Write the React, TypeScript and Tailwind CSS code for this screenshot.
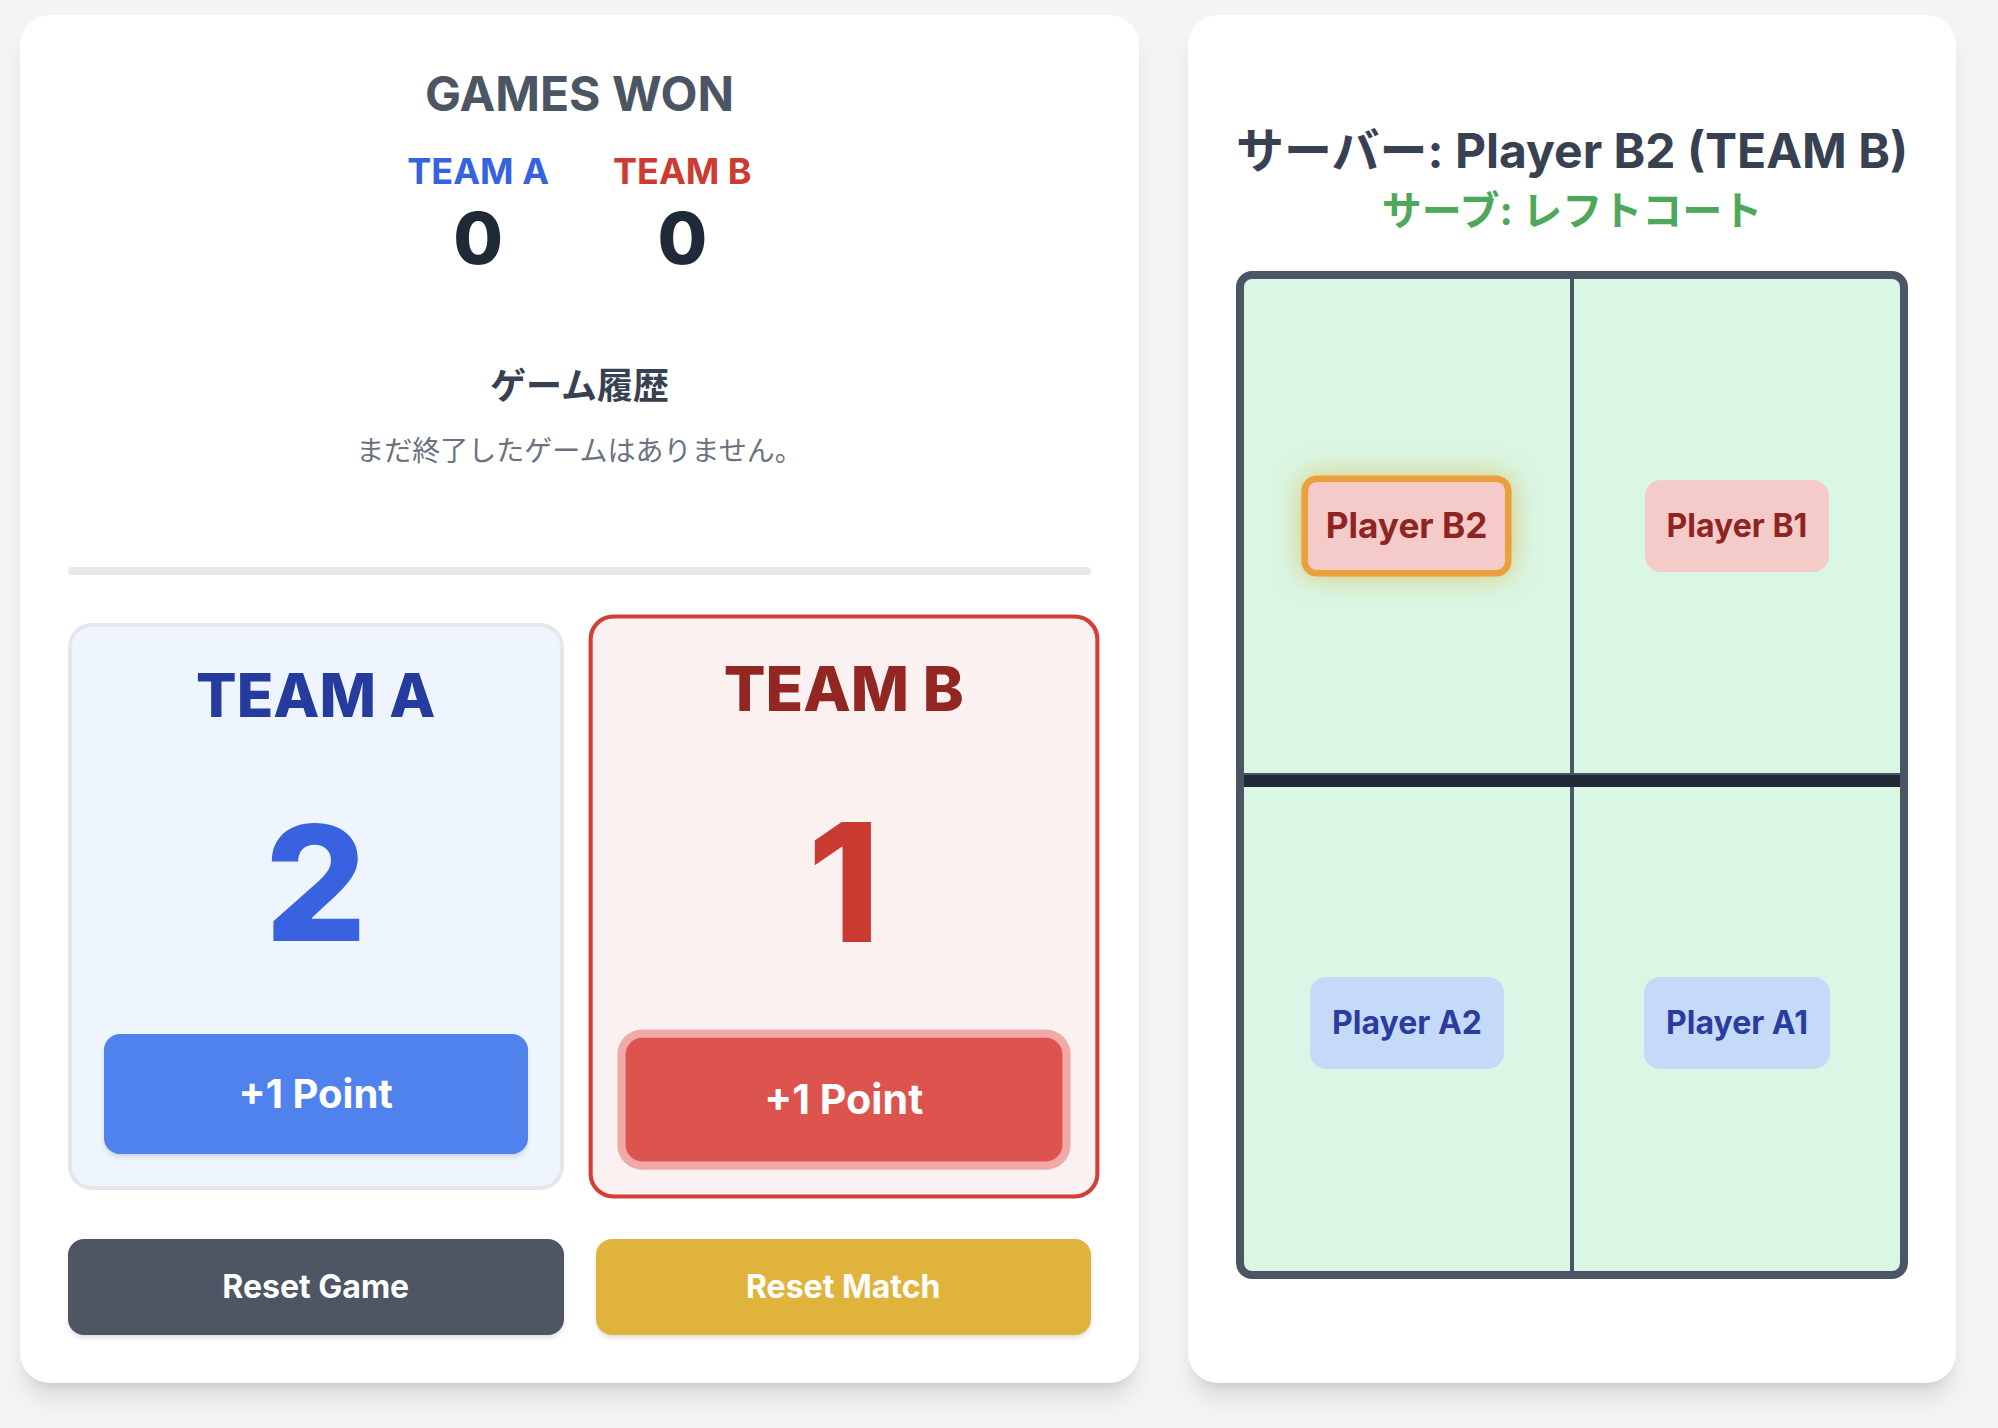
import React from "react";

function TeamCard({
  name,
  score,
  active,
}: {
  name: string;
  score: number;
  active: boolean;
}) {
  if (active) {
    return (
      <div className="h-[567px] scale-[1.03] rounded-[24px] border-4 border-[#d33f36] bg-[#fbf1f0] px-[32px] pt-[38px] pb-[32px] flex flex-col items-center">
        <div className="text-[60px] leading-[60px] font-extrabold text-[#922622]">{name}</div>
        <div className="mt-[78px] text-[160px] leading-[160px] font-extrabold text-[#c93a30]">{score}</div>
        <button className="mt-auto w-full h-[120px] rounded-[16px] bg-[#dd534e] text-white text-[40px] font-bold shadow-md ring-[8px] ring-[#f0a9a7]">
          +1 Point
        </button>
      </div>
    );
  }
  return (
    <div className="h-[567px] rounded-[24px] border-4 border-[#e5e7eb] bg-[#eef5fe] px-[32px] pt-[38px] pb-[32px] flex flex-col items-center">
      <div className="text-[60px] leading-[60px] font-extrabold text-[#253b9e]">{name}</div>
      <div className="mt-[78px] text-[160px] leading-[160px] font-extrabold text-[#3862e0]">{score}</div>
      <button className="mt-auto w-full h-[120px] rounded-[16px] bg-[#5082ee] text-white text-[40px] font-bold shadow-md">
        +1 Point
      </button>
    </div>
  );
}

function Badge({
  label,
  team,
  serving,
}: {
  label: string;
  team: "A" | "B";
  serving?: boolean;
}) {
  if (serving) {
    return (
      <div className="h-[92px] px-[16px] flex items-center scale-110 rounded-[14px] border-[6px] border-[#eaa03d] bg-[#f5cbca] text-[32px] font-bold text-[#8f2522] shadow-[0_0_24px_rgba(214,170,40,0.6)]">
        {label}
      </div>
    );
  }
  if (team === "B") {
    return (
      <div className="h-[92px] px-[16px] flex items-center rounded-[16px] border-[6px] border-transparent bg-[#f5cbca] text-[32px] font-bold text-[#8f2522]">
        {label}
      </div>
    );
  }
  return (
    <div className="h-[92px] px-[16px] flex items-center rounded-[16px] border-[6px] border-transparent bg-[#c5daf8] text-[32px] font-bold text-[#2b3c9f]">
      {label}
    </div>
  );
}

export default function App() {
  return (
    <div className="min-h-screen w-full bg-[#f3f4f6] pl-[20px] pt-[15px] pb-[45px] font-[family-name:Inter,'Noto_Sans_CJK_JP',sans-serif]">
      <div className="flex items-stretch gap-[49px]">
        {/* Left card */}
        <div className="w-[1119px] bg-white rounded-[30px] shadow-xl p-[48px] flex flex-col">
          <h2 className="text-center text-[48px] leading-[62px] font-bold text-[#4b5563]">GAMES WON</h2>
          <div className="mt-[26px] flex justify-center gap-[64px]">
            <div className="flex flex-col items-center">
              <div className="text-[36px] leading-[40px] font-bold text-[#3563e0]">TEAM A</div>
              <div className="mt-[11px] text-[72px] leading-[72px] font-extrabold text-[#1f2937]">0</div>
            </div>
            <div className="flex flex-col items-center">
              <div className="text-[36px] leading-[40px] font-bold text-[#cc3a30]">TEAM B</div>
              <div className="mt-[11px] text-[72px] leading-[72px] font-extrabold text-[#1f2937]">0</div>
            </div>
          </div>
          <div className="mt-[88px] text-center text-[36px] leading-[48px] font-bold text-[#374151]">ゲーム履歴</div>
          <p className="mt-[21px] text-center text-[28px] leading-[40px] text-[#6b7280]">
            まだ終了したゲームはありません。
          </p>
          <div className="mt-[96px] h-[8px] rounded-full bg-[#e5e7eb]" />
          <div className="mt-[48px] grid grid-cols-2 gap-[32px]">
            <TeamCard name="TEAM A" score={2} active={false} />
            <TeamCard name="TEAM B" score={1} active={true} />
          </div>
          <div className="mt-[49px] grid grid-cols-2 gap-[32px]">
            <button className="h-[96px] rounded-[16px] bg-[#4e5563] text-white text-[32px] font-bold shadow-md">
              Reset Game
            </button>
            <button className="h-[96px] rounded-[16px] bg-[#e0b43c] text-white text-[32px] font-bold shadow-md">
              Reset Match
            </button>
          </div>
        </div>

        {/* Right card */}
        <div className="w-[768px] bg-white rounded-[30px] shadow-xl px-[48px] pt-[106px] flex flex-col">
          <h2 className="text-center whitespace-nowrap text-[48px] leading-[60px] font-bold text-[#374151]">
            サーバー: Player B2 (TEAM B)
          </h2>
          <p className="mt-[8px] text-center text-[40px] leading-[44px] font-bold text-[#4ea85a]">
            サーブ: レフトコート
          </p>
          <div className="mt-[38px] relative h-[1008px] rounded-[16px] border-[8px] border-[#4b5563] bg-[#daf6e4] overflow-hidden grid grid-cols-2 grid-rows-2">
            <div className="border-r-2 border-b-2 border-[#4b5563] flex items-center justify-center">
              <Badge label="Player B2" team="B" serving />
            </div>
            <div className="border-l-2 border-b-2 border-[#4b5563] flex items-center justify-center">
              <Badge label="Player B1" team="B" />
            </div>
            <div className="border-r-2 border-[#4b5563] flex items-center justify-center">
              <Badge label="Player A2" team="A" />
            </div>
            <div className="border-l-2 border-[#4b5563] flex items-center justify-center">
              <Badge label="Player A1" team="A" />
            </div>
            <div className="absolute left-0 right-0 top-1/2 h-[12px] bg-[#1f2937]" />
          </div>
        </div>
      </div>
    </div>
  );
}
